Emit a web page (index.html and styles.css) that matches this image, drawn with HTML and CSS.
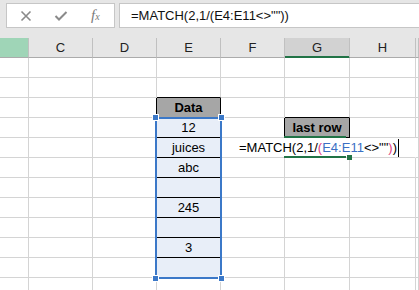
FILE: index.html
```html
<!DOCTYPE html>
<html lang="en">
<head>
    <meta charset="UTF-8">
    <title>MATCH last row</title>
    <link rel="stylesheet" href="styles.css">
</head>
<body>
    <div class="formula-bar">
        <div class="fx-buttons">
            <svg class="btn-icon" width="12" height="12" viewBox="0 0 12 12">
                <path d="M1.5 1.5 L10.5 10.5 M10.5 1.5 L1.5 10.5" stroke="#8a8a8a" stroke-width="1.6" fill="none"/>
            </svg>
            <svg class="btn-icon" width="14" height="12" viewBox="0 0 14 12">
                <path d="M1.5 6 L5 9.5 L12.5 2" stroke="#8a8a8a" stroke-width="2" fill="none"/>
            </svg>
            <span class="fx">f<small>x</small></span>
        </div>
        <div class="formula-input">=MATCH(2,1/(E4:E11&lt;&gt;""))</div>
    </div>

    <div class="sheet">
        <table class="grid">
            <colgroup>
                <col class="w-a"><col class="w-64"><col class="w-64"><col class="w-64"><col class="w-64"><col class="w-g"><col class="w-h"><col>
            </colgroup>
            <tr class="heads">
                <th class="picked"></th><th>C</th><th>D</th><th>E</th><th>F</th><th class="active-col">G</th><th>H</th><th></th>
            </tr>
            <tr><td></td><td></td><td></td><td></td><td></td><td></td><td></td><td></td></tr>
            <tr><td></td><td></td><td></td><td class="bb"></td><td></td><td></td><td></td><td></td></tr>
            <tr><td></td><td></td><td class="rb"></td><td class="label">Data</td><td></td><td class="bb"></td><td></td><td></td></tr>
            <tr><td></td><td></td><td></td><td class="data">12</td><td class="rb"></td><td class="label">last row</td><td></td><td></td></tr>
            <tr><td></td><td></td><td></td><td class="data">juices</td><td class="edit-cover"></td><td class="editing">
                <span class="edit-text">=MATCH(2,1/<span class="pink">(</span><span class="blue">E4:E11</span>&lt;&gt;""<span class="pink">)</span>)</span>
            </td><td class="edit-cover"></td><td></td></tr>
            <tr><td></td><td></td><td></td><td class="data">abc</td><td></td><td></td><td></td><td></td></tr>
            <tr><td></td><td></td><td></td><td class="data"></td><td></td><td></td><td></td><td></td></tr>
            <tr><td></td><td></td><td></td><td class="data">245</td><td></td><td></td><td></td><td></td></tr>
            <tr><td></td><td></td><td></td><td class="data"></td><td></td><td></td><td></td><td></td></tr>
            <tr><td></td><td></td><td></td><td class="data">3</td><td></td><td></td><td></td><td></td></tr>
            <tr><td></td><td></td><td></td><td class="data"></td><td></td><td></td><td></td><td></td></tr>
            <tr><td></td><td></td><td></td><td></td><td></td><td></td><td></td><td></td></tr>
        </table>

        <div class="selection">
            <span class="handle tl"></span><span class="handle tr"></span>
            <span class="handle bl"></span><span class="handle br"></span>
        </div>
        <div class="active-cell"><span class="fill-handle"></span></div>
    </div>
</body>
</html>
```

FILE: styles.css
```css
body {
    margin: 0;
    background-color: #fff;
    font-family: "Liberation Sans", Arial, sans-serif;
    font-size: 13px;
    color: #000;
    overflow: hidden;
}
.formula-bar {
    display: flex;
    gap: 4px;
    height: 38px;
    padding: 3px 0 0 6px;
    box-sizing: border-box;
    background-color: #e6e6e6;
}
.fx-buttons {
    display: flex;
    align-items: center;
    width: 109px;
    height: 25px;
    box-sizing: border-box;
    background-color: #fff;
    border: 1px solid #c6c6c6;
    padding-left: 13px;
}
.btn-icon {
    display: block;
}
.btn-icon + .btn-icon {
    margin-left: 22px;
}
.fx {
    margin-left: 23px;
    font-family: "Liberation Serif", serif;
    font-style: italic;
    font-size: 15px;
    color: #7a7a7a;
}
.fx small {
    font-size: 10px;
}
.formula-input {
    flex: 1;
    height: 25px;
    box-sizing: border-box;
    background-color: #fff;
    border: 1px solid #c6c6c6;
    border-right: none;
    padding-left: 11px;
    line-height: 23px;
    color: #111;
}
.sheet {
    position: relative;
}
.grid {
    table-layout: fixed;
    border-collapse: separate;
    border-spacing: 0;
    width: 419px;
}
.w-a { width: 29px; }
.w-64 { width: 64px; }
.w-g { width: 65px; }
.w-h { width: 66px; }
.grid th, .grid td {
    height: 19px;
    padding: 0;
    border-right: 1px solid #d4d4d4;
    border-bottom: 1px solid #d4d4d4;
    text-align: center;
    vertical-align: bottom;
    line-height: 18px;
    white-space: nowrap;
}
.heads th {
    background-color: #e6e6e6;
    border-right-color: #c0c0c0;
    border-bottom-color: #ababab;
    font-weight: normal;
    color: #222;
    vertical-align: middle;
}
.heads th.picked {
    background-color: #9fd5b7;
}
.heads th.active-col {
    background-color: #d2d2d2;
    border-bottom: 1px solid #217346;
    box-shadow: inset 0 -1px 0 #217346;
}
.grid td.bb {
    border-bottom-color: #000;
}
.grid td.rb {
    border-right-color: #000;
}
.grid td.label {
    background-color: #a6a6a6;
    border-right-color: #000;
    border-bottom-color: #000;
    font-weight: bold;
}
.grid td.data {
    background-color: #e8eef8;
    border-bottom-color: #000;
}
.grid td.edit-cover {
    border-right-color: #fff;
}
.grid td.editing {
    position: relative;
    border-right-color: #fff;
}
.edit-text {
    position: absolute;
    left: 50%;
    bottom: 0;
    transform: translateX(-50%);
    padding: 0 1px 0 4px;
    background-color: #fff;
    border-right: 1px solid #000;
    line-height: 18px;
}
.pink { color: #e0407f; }
.blue { color: #3a6fc4; }
.selection {
    position: absolute;
    left: 155px;
    top: 79px;
    width: 67px;
    height: 162px;
    box-sizing: border-box;
    border: 2px solid #3b78c8;
}
.handle {
    position: absolute;
    width: 5px;
    height: 5px;
    background-color: #3b78c8;
    border: 1px solid #fff;
}
.handle.tl { left: -5px; top: -5px; }
.handle.tr { right: -5px; top: -5px; }
.handle.bl { left: -5px; bottom: -5px; }
.handle.br { right: -5px; bottom: -5px; }
.active-cell {
    position: absolute;
    left: 284px;
    top: 98px;
    width: 62px;
    height: 22px;
    box-sizing: border-box;
    border-top: 2px solid #217346;
    border-bottom: 2px solid #217346;
}
.fill-handle {
    position: absolute;
    right: -6px;
    bottom: -4px;
    width: 5px;
    height: 5px;
    background-color: #217346;
}
```
